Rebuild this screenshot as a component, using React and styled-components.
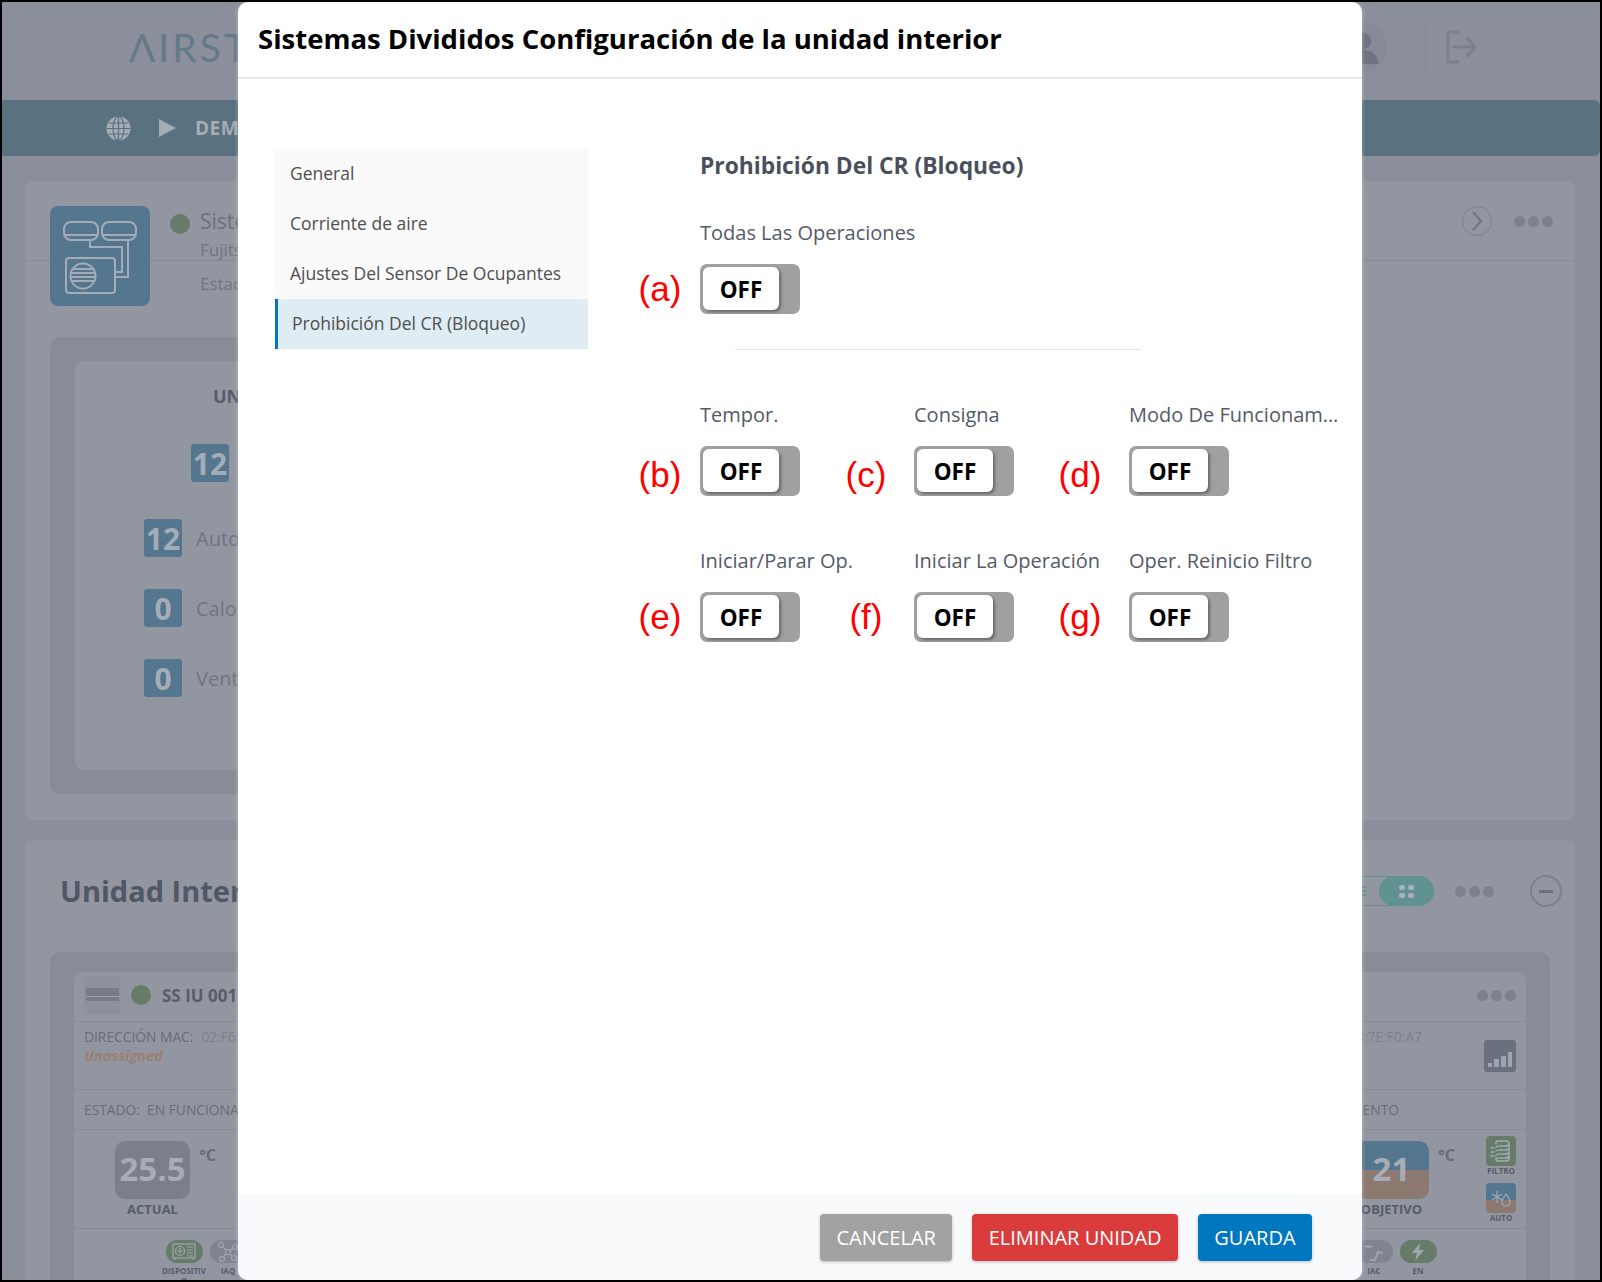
import React from 'react';
import styled, { createGlobalStyle } from 'styled-components';

const GlobalStyle = createGlobalStyle`
  html, body {
    margin: 0;
    padding: 0;
    font-family: 'Open Sans', 'Liberation Sans', sans-serif;
  }
  * { box-sizing: border-box; }
`;

const Frame = styled.div`
  position: relative;
  width: 1602px;
  height: 1282px;
  border: 2px solid #000;
  overflow: hidden;
  background: #8a8f9b;
`;

/* dimmed page behind the dialog */
const TopBar = styled.header`
  display: flex;
  align-items: center;
  justify-content: space-between;
  height: 98px;
  padding: 0 123px 8px 127px;
`;

const Logo = styled.div`
  font-family: Lato, 'Open Sans', sans-serif;
  font-size: 39px;
  font-weight: 400;
  letter-spacing: 3px;
  color: #66798a;
  white-space: nowrap;
`;

const TopActions = styled.div`
  display: flex;
  align-items: center;
  gap: 19px;
`;

const Avatar = styled.div`
  width: 50px;
  height: 50px;
  margin-right: 19px;
  border-radius: 50%;
  background: #858a96;
  overflow: hidden;
  color: #6d7382;
`;

const Separator = styled.div`
  width: 1px;
  height: 50px;
  background: #858a96;
`;

const NavBar = styled.nav`
  display: flex;
  align-items: center;
  gap: 19px;
  height: 56px;
  padding-left: 104px;
  background: #5a7180;
  border-radius: 0 6px 6px 0;
  color: #a5acb6;
  font-size: 19px;
  font-weight: 700;
  letter-spacing: 0.5px;
`;

const PlayIcon = styled.svg`
  margin-left: 9px;
`;

const Card = styled.section`
  margin: ${(p) => p.$margin};
  height: ${(p) => p.$height}px;
  background: #9296a1;
  border-radius: 8px;
`;

const SystemHeader = styled.div`
  display: flex;
  justify-content: space-between;
  height: 80px;
  padding: 25px 22px 0 25px;
  border-bottom: 1px solid #878b96;
`;

const SystemInfo = styled.div`
  display: flex;
  gap: 20px;
`;

const BlueTile = styled.div`
  width: 100px;
  height: 100px;
  border-radius: 8px;
  background: #54768f;
  color: #a4acb6;
`;

const Dot = styled.span`
  flex: none;
  width: 20px;
  height: 20px;
  border-radius: 50%;
  background: #677b69;
`;

const StatusDot = styled(Dot)`
  margin-top: 3px;
`;

const SystemName = styled.div`
  display: flex;
  gap: 10px;
  font-size: 21px;
  line-height: 20px;
  margin-top: 5px;
  color: #6b707e;
`;

const SystemMeta = styled.div`
  margin: ${(p) => p.$top}px 0 0 30px;
  font-size: 17px;
  line-height: 20px;
  color: #6f7583;
`;

const Controls = styled.div`
  display: flex;
  align-items: center;
  gap: 22px;
  height: 30px;
`;

const RoundIcon = styled.div`
  width: ${(p) => p.$size}px;
  height: ${(p) => p.$size}px;
  margin-left: ${(p) => p.$offset || 0}px;
  border-radius: 50%;
  border: ${(p) => p.$stroke}px solid #7b808c;
  color: #6d7280;
  display: flex;
  align-items: center;
  justify-content: center;
`;

const Dots = styled.div`
  display: flex;
  gap: 3px;
  span {
    width: 11px;
    height: 11px;
    border-radius: 50%;
    background: #7d818f;
  }
`;

const Panel = styled.div`
  margin: ${(p) => p.$margin};
  height: ${(p) => p.$height}px;
  padding: ${(p) => p.$padding};
  background: #888c97;
  border-radius: 10px 10px ${(p) => (p.$open ? '0 0' : '10px 10px')};
`;

const InnerCard = styled.div`
  height: 100%;
  background: #9296a1;
  border-radius: 8px;
`;

const UnitsHead = styled.div`
  padding: 24px 0 0 138px;
  font-size: 18px;
  line-height: 22px;
  font-weight: 700;
  color: #565c6b;
`;

const Badge = styled.div`
  flex: none;
  width: 38px;
  height: 38px;
  border-radius: 3px;
  background: #54768f;
  color: #a4acb6;
  font-size: 30px;
  font-weight: 700;
  display: flex;
  align-items: center;
  justify-content: center;
`;

const TotalBadge = styled(Badge)`
  margin: 37px 0 0 116px;
`;

const ModeList = styled.div`
  display: flex;
  flex-direction: column;
  gap: 32px;
  margin: 37px 0 0 69px;
`;

const ModeRow = styled.div`
  display: flex;
  align-items: center;
  gap: 14px;
  font-size: 20px;
  color: #6f7583;
`;

const SectionHead = styled.div`
  display: flex;
  align-items: center;
  justify-content: space-between;
  height: 112px;
  padding: 0 13px 10px 35px;
`;

const SectionTitle = styled.h2`
  margin: -2px 0 0;
  font-size: 29px;
  font-weight: 700;
  color: #505766;
`;

const ViewSwitch = styled.div`
  display: flex;
  align-items: center;
  gap: 21px;
`;

const PillSwitch = styled.div`
  display: flex;
  width: 110px;
  height: 30px;
  align-items: center;
  justify-content: space-between;
  padding-left: 36px;
  border-radius: 15px;
  box-shadow: inset 0 0 0 1px #5f9290;
`;

const PillLines = styled.div`
  display: flex;
  flex-direction: column;
  gap: 2px;
  width: 6px;
  span {
    height: 2px;
    background: #5f9290;
  }
`;

const PillThumb = styled.div`
  align-self: stretch;
  width: 55px;
  border-radius: 15px;
  background: #5f9290;
  display: grid;
  grid-template-columns: 6px 6px;
  gap: 3px;
  justify-content: center;
  align-content: center;
  span {
    height: 5px;
    border-radius: 2px;
    background: #a9b2bb;
  }
`;

const UnitRow = styled.div`
  display: flex;
  align-items: center;
  justify-content: space-between;
  height: ${(p) => p.$height}px;
  padding: ${(p) => p.$padding || '0 10px'};
  border-bottom: 1px solid #868a95;
  font-size: 13.8px;
  color: #666c7a;
`;

const MacRow = styled(UnitRow)`
  align-items: flex-start;
  padding: 5px 10px 0;
`;

const UnitName = styled.div`
  display: flex;
  align-items: center;
  gap: 11px;
  font-size: 17px;
  font-weight: 700;
  color: #575d6b;
`;

const AcThumb = styled.div`
  width: 36px;
  height: 37px;
  background: #8d919c;
  display: flex;
  align-items: center;
  justify-content: center;
`;

const MacText = styled.div`
  line-height: 19px;
  span { margin-left: 8px; color: #7d828f; }
  em {
    display: block;
    font-size: 14.5px;
    font-weight: 700;
    color: #9b7f71;
  }
`;

const MacRight = styled.div`
  display: flex;
  align-items: flex-start;
  gap: 62px;
  line-height: 19px;
  color: #7d828f;
`;

const SignalBox = styled.div`
  width: 32px;
  height: 32px;
  margin-top: 13px;
  padding-bottom: 5px;
  border-radius: 3px;
  background: #6b707e;
  color: #9ea3ad;
  display: flex;
  align-items: flex-end;
  justify-content: center;
`;

const TempRow = styled(UnitRow)`
  align-items: flex-start;
  padding: 11px 10px 0 41px;
`;

const TempGroup = styled.div`
  display: flex;
  gap: 9px;
`;

const TempCol = styled.div`
  display: flex;
  flex-direction: column;
  align-items: center;
  gap: 1px;
  font-size: 13px;
  font-weight: 700;
  color: #565c6b;
`;

const TempBox = styled.div`
  width: 75px;
  height: 58px;
  padding-bottom: 3px;
  border-radius: 10px;
  background: ${(p) => (p.$target ? 'linear-gradient(#54768f 50%, #8c7a70 50%)' : '#7a7f8b')};
  color: #a7acb6;
  font-size: 33px;
  font-weight: 700;
  display: flex;
  align-items: center;
  justify-content: center;
`;

const Degree = styled.span`
  font-size: 16px;
  font-weight: 700;
  color: #666c7a;
  margin-top: 3px;
`;

const SideIcons = styled.div`
  display: flex;
  flex-direction: column;
  align-items: center;
  margin: -5px 0 0 22px;
  font-size: 8px;
  line-height: 9px;
  font-weight: 700;
  color: #565c6b;
`;

const ModeTile = styled.div`
  width: 30px;
  height: 30px;
  margin-top: ${(p) => p.$top || 0}px;
  border-radius: 4px;
  background: ${(p) => (p.$auto ? 'linear-gradient(#54768f 55%, #8c7a70 55%)' : '#677b69')};
  color: #a4acb6;
  display: flex;
  align-items: center;
  justify-content: center;
`;

const PillRow = styled.div`
  display: flex;
  justify-content: space-between;
  padding: 11px 86px 0 88px;
`;

const PillGroup = styled.div`
  display: flex;
  gap: 0;
`;

const PillItem = styled.div`
  width: 44px;
  font-size: 8px;
  line-height: 10px;
  font-weight: 700;
  text-align: center;
  word-break: break-all;
  color: #565c6b;
`;

const StatusPill = styled.div`
  width: 37px;
  height: 23px;
  margin: 0 auto 3px;
  border-radius: 12px;
  background: ${(p) => (p.$on ? '#677b69' : '#7f8490')};
  color: #a0a6b0;
  display: flex;
  align-items: center;
  justify-content: center;
`;

/* the dialog */
const Modal = styled.div`
  position: absolute;
  top: 0;
  left: 236px;
  width: 1124px;
  height: 1278px;
  display: flex;
  flex-direction: column;
  background: #fff;
  border-radius: 10px;
  box-shadow: 0 0 4px rgba(255, 255, 255, 0.4);
  overflow: hidden;
`;

const ModalHeader = styled.div`
  flex: none;
  height: 77px;
  padding: 0 0 3px 20px;
  display: flex;
  align-items: center;
  border-bottom: 2px solid #e5e7ea;
`;

const ModalTitle = styled.h1`
  margin: 0;
  font-size: 27.5px;
  font-weight: 700;
  color: #000;
`;

const ModalBody = styled.div`
  flex: 1;
  display: flex;
  gap: 112px;
  padding: 70px 0 0 37px;
`;

const SideMenu = styled.ul`
  flex: none;
  width: 313px;
  height: 200px;
  margin: 0;
  padding: 0;
  list-style: none;
  background: #fafafa;
`;

const MenuItem = styled.li`
  height: 50px;
  display: flex;
  align-items: center;
  padding: 0 0 2px ${(p) => (p.$active ? '14px' : '15px')};
  font-size: 17.5px;
  color: #4f4f4f;
  background: ${(p) => (p.$active ? '#dfecf4' : 'transparent')};
  border-left: ${(p) => (p.$active ? '3px solid #0177bf' : 'none')};
`;

const Settings = styled.div`
  flex: none;
  width: 644px;
`;

const SettingsTitle = styled.h3`
  margin: 0 0 36px;
  height: 34px;
  font-size: 22.8px;
  line-height: 34px;
  font-weight: 700;
  color: #4a4f5c;
`;

const Divider = styled.hr`
  width: 406px;
  height: 1px;
  margin: 35px 0 51px 35px;
  border: 0;
  background: #e2e4e7;
`;

const FieldGrid = styled.div`
  display: grid;
  grid-template-columns: 214px 215px 214px;
  row-gap: 51px;
`;

const Field = styled.div`
  position: relative;
`;

const FieldLabel = styled.div`
  width: ${(p) => (p.$wide ? '300px' : '210px')};
  height: 28px;
  margin-bottom: 17px;
  font-size: 20px;
  line-height: 28px;
  color: #555a67;
  white-space: nowrap;
  overflow: hidden;
  text-overflow: ellipsis;
`;

const Toggle = styled.div`
  position: relative;
  width: 100px;
  height: 50px;
  padding: 3px;
  background: #a0a0a0;
  border-radius: 7px;
`;

const ToggleKnob = styled.div`
  width: 76px;
  height: 43px;
  padding-top: 2px;
  border-radius: 6px;
  background: #fff;
  box-shadow: 2px 2px 3px rgba(0, 0, 0, 0.35);
  display: flex;
  align-items: center;
  justify-content: center;
  font-size: 22.5px;
  font-weight: 700;
  color: #000;
`;

/* red call-outs drawn over the screenshot */
const Callout = styled.span`
  position: absolute;
  left: ${(p) => p.$left}px;
  bottom: ${(p) => p.$bottom}px;
  width: 60px;
  text-align: center;
  font-family: 'Liberation Sans', Arial, sans-serif;
  font-size: 35px;
  line-height: 44px;
  color: #f00;
`;

const ModalFooter = styled.div`
  flex: none;
  height: 86px;
  padding: 20px 50px 0 0;
  display: flex;
  justify-content: flex-end;
  gap: 20px;
  background: #f8f9fb;
`;

const Button = styled.button`
  height: 47px;
  padding: 0 16.4px;
  border: 0;
  border-radius: 4px;
  background: ${(p) => p.$bg};
  box-shadow: 0 1px 3px rgba(0, 0, 0, 0.25);
  font-family: inherit;
  font-size: 20px;
  color: #fff;
`;

const ThreeDots = () => (
  <Dots>
    <span />
    <span />
    <span />
  </Dots>
);

const Globe = () => (
  <svg width="25" height="25" viewBox="0 0 25 25" fill="none">
    <circle cx="12.5" cy="12.5" r="12" fill="#a5acb6" />
    <g stroke="#5a7180" strokeWidth="1.2">
      <ellipse cx="12.5" cy="12.5" rx="5.5" ry="12" />
      <path d="M12.5 1v23M.5 12.5h24M2.6 7h19.8M2.6 18h19.8" />
    </g>
  </svg>
);

const SplitSystemIcon = () => (
  <svg width="100" height="100" viewBox="0 0 100 100" fill="none" stroke="currentColor" strokeWidth="2">
    <rect x="14" y="16" width="34" height="18" rx="7" />
    <rect x="52" y="16" width="34" height="18" rx="7" />
    <path d="M14 29h34M52 29h34M40 34v7h32v25h-7M78 34v37H65" />
    <rect x="16" y="52" width="49" height="35" rx="3" />
    <circle cx="33" cy="70" r="12.5" />
    <path d="M22 63h22M21 67h24M21 71h24M22 75h22" />
  </svg>
);

const AcGlyph = () => (
  <svg width="33" height="14" viewBox="0 0 33 14">
    <rect width="33" height="13" rx="1.5" fill="#777c88" />
    <rect y="8" width="33" height="1" fill="#9ca1ab" />
  </svg>
);

const UserGlyph = () => (
  <svg width="50" height="50" viewBox="0 0 50 50" fill="currentColor">
    <circle cx="25" cy="19" r="9" />
    <path d="M9 42c0-10 7-14 16-14s16 4 16 14z" />
  </svg>
);

const LogoutGlyph = () => (
  <svg width="32" height="34" viewBox="0 0 32 34" fill="none" stroke="#7b808c" strokeWidth="3" strokeLinecap="round" strokeLinejoin="round">
    <path d="M13 2H3v30h10M9 17h21M22 8l8 9-8 9" />
  </svg>
);

const ChevronGlyph = () => (
  <svg width="12" height="20" viewBox="0 0 12 20" fill="none" stroke="currentColor" strokeWidth="2">
    <path d="M2 1l8 9-8 9" />
  </svg>
);

const BarsGlyph = () => (
  <svg width="24" height="15" viewBox="0 0 24 15" fill="currentColor">
    <rect x="0" y="11" width="4" height="4" />
    <rect x="6" y="7" width="5" height="8" />
    <rect x="13" y="4" width="5" height="11" />
    <rect x="20" y="0" width="4" height="15" />
  </svg>
);

const FilterGlyph = () => (
  <svg width="24" height="24" viewBox="0 0 24 24" fill="none" stroke="currentColor" strokeWidth="1.4" strokeLinecap="round">
    <path d="M7 5V3.5C7 2.5 8 2 9 2h8c2 0 3 1 3 3v14c0 2-1 3-3 3H9c-1 0-2-.5-2-1.5V19" />
    <path d="M7 8c4-3 7 1 13-2M7 12c4-3 7 1 13-2M7 16c4-3 7 1 13-2M7 20c4-3 7 1 13-2M2 9h3M2 13h3M2 17h3" />
  </svg>
);

const SnowGlyph = () => (
  <svg width="22" height="18" viewBox="0 0 22 18" fill="none" stroke="currentColor" strokeWidth="1.2">
    <path d="M7 2v12M2 5l10 6M2 11l10-6" />
    <path d="M16 5c-2 3-4 5-4 8a4 4 0 0 0 8 0c0-3-2-5-4-8z" />
  </svg>
);

const BoltGlyph = () => (
  <svg width="14" height="18" viewBox="0 0 14 18" fill="currentColor">
    <path d="M9 0L1 10h5l-2 8 9-11H8z" />
  </svg>
);

const DeviceGlyph = () => (
  <svg width="24" height="17" viewBox="0 0 24 17" fill="none" stroke="currentColor" strokeWidth="1.2">
    <rect x="1" y="1" width="22" height="14" />
    <circle cx="8" cy="8" r="4.5" />
    <path d="M5 8h6M8 5v6M15 4h6M15 7h6M15 10h6M15 13h6M3 15v2M21 15v2" />
  </svg>
);

const NodesGlyph = () => (
  <svg width="22" height="20" viewBox="0 0 22 20" fill="none" stroke="currentColor" strokeWidth="1.2">
    <circle cx="4" cy="3" r="2.5" />
    <circle cx="18" cy="5" r="2.5" />
    <circle cx="11" cy="10" r="2.5" />
    <circle cx="5" cy="17" r="2.5" />
    <circle cx="17" cy="16" r="2.5" />
    <path d="M6 5l3 3M16 6l-3 3M9 12l-3 3M13 12l2 2" />
  </svg>
);

const SeatGlyph = () => (
  <svg width="22" height="20" viewBox="0 0 22 20" fill="none" stroke="currentColor" strokeWidth="2">
    <path d="M2 5c3-2 4 1 7-1M7 18h5l3-8 5 1M16 4h.1" />
  </svg>
);

const menu = ['General', 'Corriente de aire', 'Ajustes Del Sensor De Ocupantes'];

const fields = [
  { label: 'Tempor.', mark: '(b)', left: -70, bottom: -1 },
  { label: 'Consigna', mark: '(c)', left: -78, bottom: -1 },
  { label: 'Modo De Funcionamiento', mark: '(d)', left: -79, bottom: -1 },
  { label: 'Iniciar/Parar Op.', mark: '(e)', left: -70, bottom: 3 },
  { label: 'Iniciar La Operación', mark: '(f)', left: -78, bottom: 3 },
  { label: 'Oper. Reinicio Filtro', mark: '(g)', left: -79, bottom: 3 },
];

const OffToggle = () => (
  <Toggle>
    <ToggleKnob>OFF</ToggleKnob>
  </Toggle>
);

const App = () => (
  <>
    <GlobalStyle />
    <Frame>
      <TopBar>
        <Logo>ΛIRSTAGE</Logo>
        <TopActions>
          <Avatar>
            <UserGlyph />
          </Avatar>
          <Separator />
          <LogoutGlyph />
        </TopActions>
      </TopBar>
      <NavBar>
        <Globe />
        <PlayIcon width="17" height="18" viewBox="0 0 17 18">
          <path d="M0 0l17 9-17 9z" fill="#a5acb6" />
        </PlayIcon>
        <span>DEMO</span>
      </NavBar>

      <Card $margin="25px 25px 20px 23px" $height={639}>
        <SystemHeader>
          <SystemInfo>
            <BlueTile>
              <SplitSystemIcon />
            </BlueTile>
            <div>
              <SystemName>
                <StatusDot />
                Sistemas Divididos
              </SystemName>
              <SystemMeta $top={6}>Fujitsu</SystemMeta>
              <SystemMeta $top={14}>Estado</SystemMeta>
            </div>
          </SystemInfo>
          <Controls>
            <RoundIcon $size={30} $stroke={1}>
              <ChevronGlyph />
            </RoundIcon>
            <ThreeDots />
          </Controls>
        </SystemHeader>
        <Panel $margin="76px 300px 0 25px" $height={457} $padding="24px 24px 24px 25px">
          <InnerCard>
            <UnitsHead>UNIDADES</UnitsHead>
            <TotalBadge>12</TotalBadge>
            <ModeList>
              <ModeRow>
                <Badge>12</Badge>
                Auto
              </ModeRow>
              <ModeRow>
                <Badge>0</Badge>
                Calor
              </ModeRow>
              <ModeRow>
                <Badge>0</Badge>
                Ventilador
              </ModeRow>
            </ModeList>
          </InnerCard>
        </Panel>
      </Card>

      <Card $margin="0 25px 0 23px" $height={500}>
        <SectionHead>
          <SectionTitle>Unidad Interior</SectionTitle>
          <ViewSwitch>
            <PillSwitch>
              <PillLines>
                <span />
                <span />
                <span />
              </PillLines>
              <PillThumb>
                <span />
                <span />
                <span />
                <span />
              </PillThumb>
            </PillSwitch>
            <ThreeDots />
            <RoundIcon $size={32} $stroke={2} $offset={15}>
              <svg width="14" height="3" viewBox="0 0 14 3">
                <rect width="14" height="3" fill="currentColor" />
              </svg>
            </RoundIcon>
          </ViewSwitch>
        </SectionHead>
        <Panel $margin="0 25px" $height={390} $padding="20px 24px 0" $open>
          <InnerCard>
            <UnitRow $height={50} $padding="0 10px 3px">
              <UnitName>
                <AcThumb>
                  <AcGlyph />
                </AcThumb>
                <Dot />
                SS IU 001
              </UnitName>
              <ThreeDots />
            </UnitRow>
            <MacRow $height={68}>
              <MacText>
                DIRECCIÓN MAC:
                <span>02:F6:A4</span>
                <em>Unassigned</em>
              </MacText>
              <MacRight>
                <span>02:F6:A4:7E:F0:A7</span>
                <SignalBox>
                  <BarsGlyph />
                </SignalBox>
              </MacRight>
            </MacRow>
            <UnitRow $height={40} $padding="0 127px 0 10px">
              <span>ESTADO:&nbsp; EN FUNCIONAMIENTO</span>
              <span>EN FUNCIONAMIENTO</span>
            </UnitRow>
            <TempRow $height={99}>
              <TempGroup>
                <TempCol>
                  <TempBox>25.5</TempBox>
                  ACTUAL
                </TempCol>
                <Degree>°C</Degree>
              </TempGroup>
              <TempGroup>
                <TempCol>
                  <TempBox $target>21</TempBox>
                  OBJETIVO
                </TempCol>
                <Degree>°C</Degree>
                <SideIcons>
                  <ModeTile>
                    <FilterGlyph />
                  </ModeTile>
                  FILTRO
                  <ModeTile $auto $top={8}>
                    <SnowGlyph />
                  </ModeTile>
                  AUTO
                </SideIcons>
              </TempGroup>
            </TempRow>
            <PillRow>
              <PillGroup>
                <PillItem>
                  <StatusPill $on>
                    <DeviceGlyph />
                  </StatusPill>
                  DISPOSITIVO
                </PillItem>
                <PillItem>
                  <StatusPill>
                    <NodesGlyph />
                  </StatusPill>
                  IAQ
                </PillItem>
              </PillGroup>
              <PillGroup>
                <PillItem>
                  <StatusPill>
                    <SeatGlyph />
                  </StatusPill>
                  IAC
                </PillItem>
                <PillItem>
                  <StatusPill $on>
                    <BoltGlyph />
                  </StatusPill>
                  EN
                </PillItem>
              </PillGroup>
            </PillRow>
          </InnerCard>
        </Panel>
      </Card>

      <Modal>
        <ModalHeader>
          <ModalTitle>Sistemas Divididos Configuración de la unidad interior</ModalTitle>
        </ModalHeader>
        <ModalBody>
          <SideMenu>
            {menu.map((item) => (
              <MenuItem key={item}>{item}</MenuItem>
            ))}
            <MenuItem $active>Prohibición Del CR (Bloqueo)</MenuItem>
          </SideMenu>
          <Settings>
            <SettingsTitle>Prohibición Del CR (Bloqueo)</SettingsTitle>
            <Field>
              <FieldLabel $wide>Todas Las Operaciones</FieldLabel>
              <OffToggle />
              <Callout $left={-70} $bottom={3}>(a)</Callout>
            </Field>
            <Divider />
            <FieldGrid>
              {fields.map((f) => (
                <Field key={f.label}>
                  <FieldLabel>{f.label}</FieldLabel>
                  <OffToggle />
                  <Callout $left={f.left} $bottom={f.bottom}>{f.mark}</Callout>
                </Field>
              ))}
            </FieldGrid>
          </Settings>
        </ModalBody>
        <ModalFooter>
          <Button $bg="#a2a2a2">CANCELAR</Button>
          <Button $bg="#da3c3c">ELIMINAR UNIDAD</Button>
          <Button $bg="#0177bf">GUARDA</Button>
        </ModalFooter>
      </Modal>
    </Frame>
  </>
);

export default App;
